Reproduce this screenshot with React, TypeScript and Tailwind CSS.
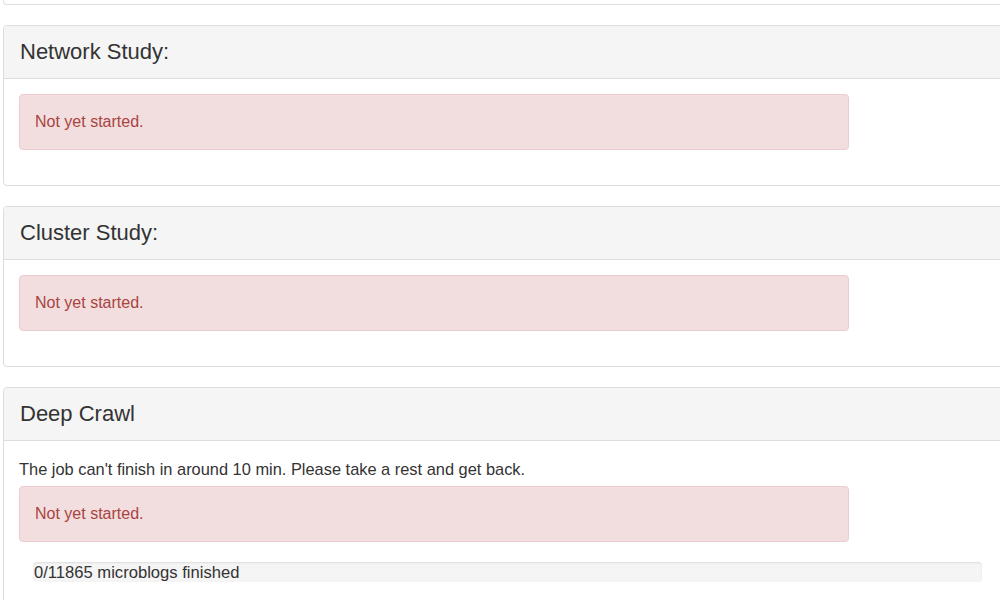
import React from "react";

function Alert({ children }: { children: React.ReactNode }) {
  return (
    <div className="w-[830px] h-[56px] flex items-center px-[15px] rounded-[4px] border border-[#ebccd1] bg-[#f2dede] text-[#a94442] text-[16px]">
      {children}
    </div>
  );
}

function Panel({ title, children }: { title: string; children: React.ReactNode }) {
  return (
    <div className="ml-[3px] w-[1010px] rounded-[4px] border border-[#dddddd] bg-white">
      <div className="h-[53px] flex items-center px-[16px] bg-[#f5f5f5] border-b border-[#dddddd] rounded-t-[3px]">
        <h3 className="text-[22px] leading-none text-[#333333]">{title}</h3>
      </div>
      <div className="p-[15px]">{children}</div>
    </div>
  );
}

export default function App() {
  return (
    <div
      className="w-[1000px] h-[600px] overflow-hidden bg-white text-[#333333]"
      style={{ fontFamily: '"Liberation Sans", Arial, sans-serif' }}
    >
      <div className="ml-[3px] w-[1010px] h-[5px] border-l border-b border-[#dddddd] rounded-bl-[4px]" />
      <div className="flex flex-col gap-[20px] mt-[20px]">
        <Panel title="Network Study:">
          <div className="mb-[20px]">
            <Alert>Not yet started.</Alert>
          </div>
        </Panel>
        <Panel title="Cluster Study:">
          <div className="mb-[20px]">
            <Alert>Not yet started.</Alert>
          </div>
        </Panel>
        <Panel title="Deep Crawl">
          <p className="text-[16.4px] leading-[26px] mb-[4px]">
            The job can't finish in around 10 min. Please take a rest and get back.
          </p>
          <div className="mb-[20px]">
            <Alert>Not yet started.</Alert>
          </div>
          <div className="ml-[14px] mb-[20px] w-[949px] h-[20px] rounded-[4px] bg-[#f5f5f5] shadow-[inset_0_1px_2px_rgba(0,0,0,0.1)] flex items-center">
            <span className="text-[16.6px] leading-none pl-[1px] pt-[3px]">0/11865 microblogs finished</span>
          </div>
        </Panel>
      </div>
    </div>
  );
}
